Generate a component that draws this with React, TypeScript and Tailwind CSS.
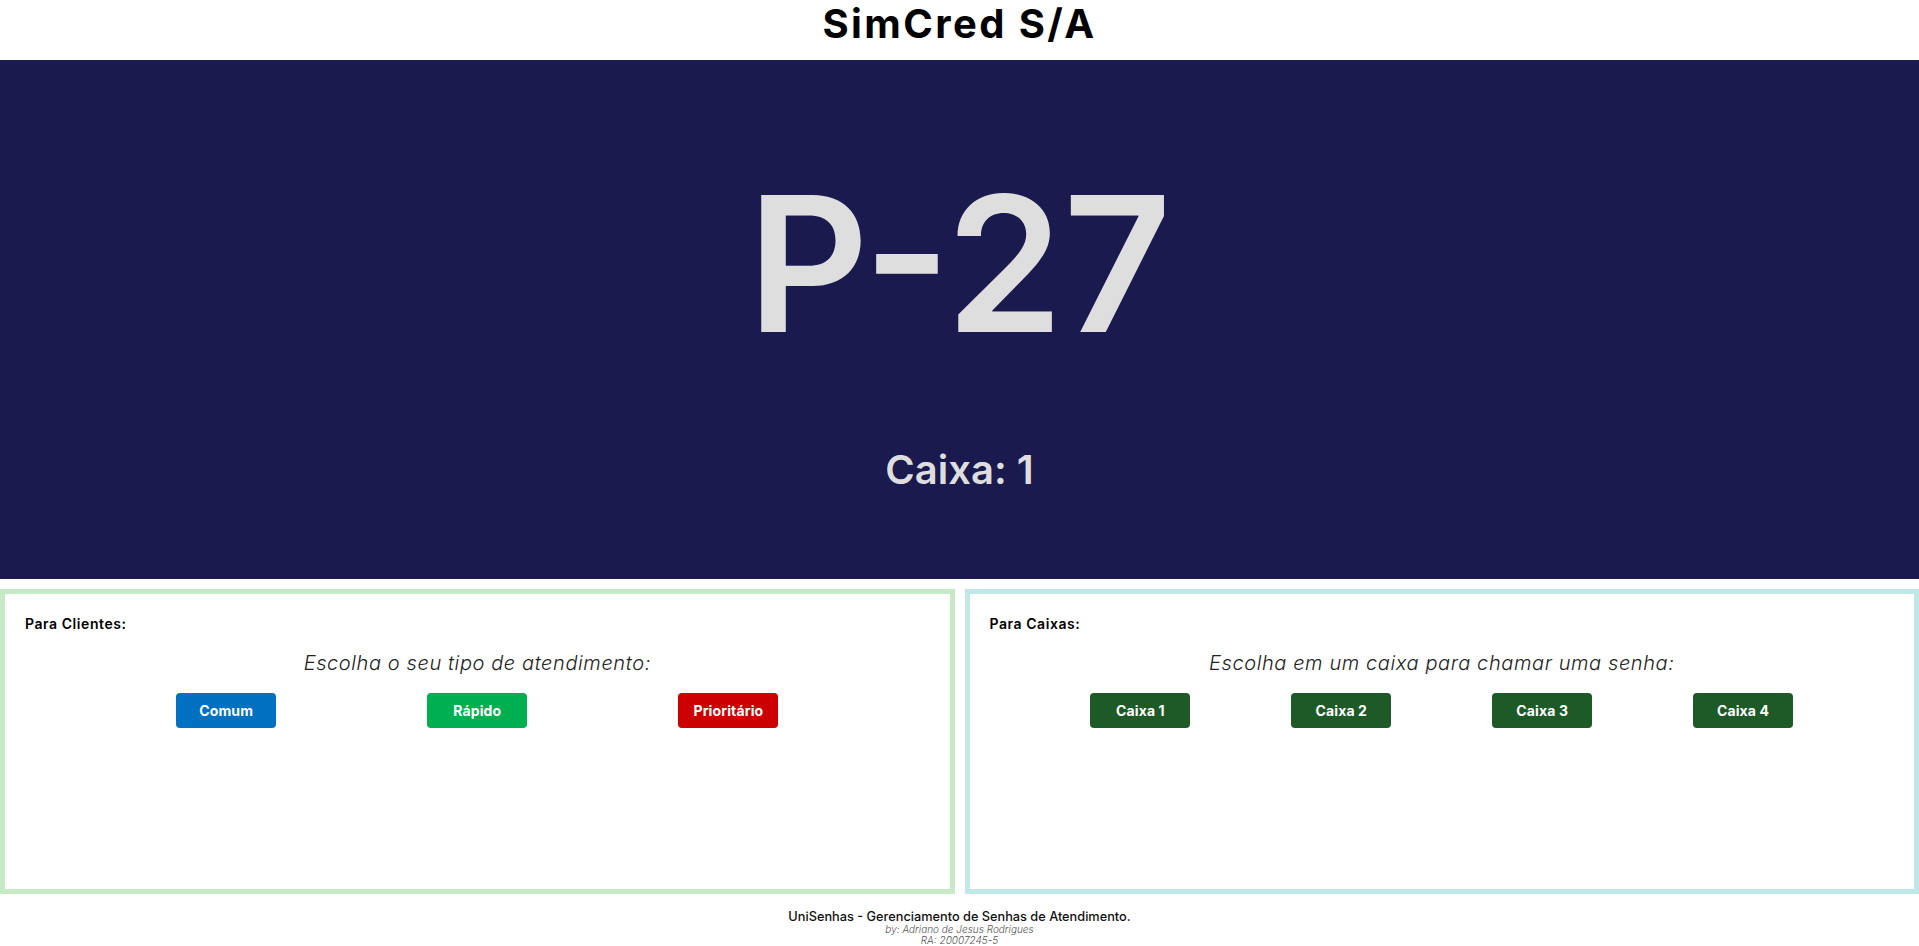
import React from "react";

const font = { fontFamily: "Inter, 'Noto Sans', sans-serif" };

const clientButtons = [
  { label: "Comum", className: "bg-[#0070c0]" },
  { label: "Rápido", className: "bg-[#00b050]" },
  { label: "Prioritário", className: "bg-[#cc0000]" },
];

const caixaButtons = ["Caixa 1", "Caixa 2", "Caixa 3", "Caixa 4"];

const Btn: React.FC<{ label: string; className: string }> = ({ label, className }) => (
  <button
    className={`w-[100px] h-[35px] rounded-[4px] flex items-center justify-center text-white text-[14px] font-bold tracking-[0.01em] ${className}`}
  >
    {label}
  </button>
);

const Panel: React.FC<{
  title: string;
  subtitle: string;
  border: string;
  children: React.ReactNode;
}> = ({ title, subtitle, border, children }) => (
  <section className={`flex-1 h-[305px] border-[5px] ${border} px-[20px] pt-[21px]`}>
    <h3 className="text-[14px] leading-[18px] font-semibold tracking-[0.04em] text-black">{title}</h3>
    <p className="mt-[20px] text-center text-[20px] leading-none italic font-light tracking-[0.03em] text-[#222]">
      {subtitle}
    </p>
    <div className="mt-[20px] flex justify-evenly">{children}</div>
  </section>
);

export default function App() {
  return (
    <div className="w-full min-h-screen bg-white" style={font}>
      {/* ── Header ─────────────────────────────────────────── */}
      <header className="h-[60px] pt-[4px] text-center">
        <h1 className="text-[40px] leading-none font-bold text-black tracking-[0.06em]">SimCred S/A</h1>
      </header>

      {/* ── Current ticket display ─────────────────────────── */}
      <main className="h-[519px] bg-[#1b1a4f] flex flex-col items-center pt-[110px] text-[#dedede]">
        <div className="text-[188px] leading-none font-semibold">P-27</div>
        <div className="mt-[92px] text-[40px] leading-none font-semibold">Caixa: 1</div>
      </main>

      {/* ── Control panels ─────────────────────────────────── */}
      <div className="mt-[10px] flex gap-[10px]">
        <Panel title="Para Clientes:" subtitle="Escolha o seu tipo de atendimento:" border="border-[#c6eac4]">
          {clientButtons.map((b) => (
            <Btn key={b.label} label={b.label} className={b.className} />
          ))}
        </Panel>
        <Panel
          title="Para Caixas:"
          subtitle="Escolha em um caixa para chamar uma senha:"
          border="border-[#c0e8e6]"
        >
          {caixaButtons.map((c) => (
            <Btn key={c} label={c} className="bg-[#1d5a27]" />
          ))}
        </Panel>
      </div>

      {/* ── Footer ─────────────────────────────────────────── */}
      <footer className="mt-[15px] text-center">
        <p className="text-[12.75px] leading-[15px] font-medium text-[#111]">
          UniSenhas - Gerenciamento de Senhas de Atendimento.
        </p>
        <p className="text-[10px] leading-[11px] italic font-light text-[#555]">by: Adriano de Jesus Rodrigues</p>
        <p className="text-[10px] leading-[11px] italic font-light text-[#555]">RA: 20007245-5</p>
      </footer>
    </div>
  );
}
